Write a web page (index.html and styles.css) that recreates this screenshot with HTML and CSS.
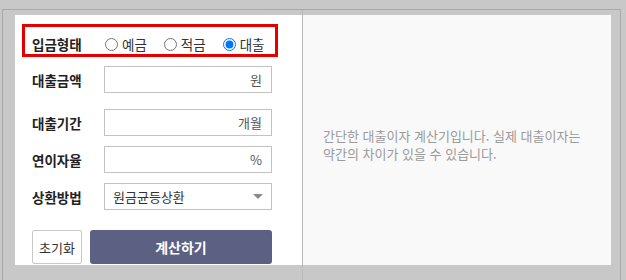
FILE: index.html
```html
<!DOCTYPE html>
<html lang="ko">
<head>
  <meta charset="UTF-8">
  <meta name="viewport" content="width=device-width, initial-scale=1.0">
  <title>대출이자 계산기</title>
  <link rel="stylesheet" href="styles.css">
</head>
<body>
  <div class="frame">
    <div class="col col-left">
      <form class="calc" id="loanForm">
        <div class="row row-type">
          <span class="label">입금형태</span>
          <div class="options">
            <label class="option"><input type="radio" name="type" value="deposit">예금</label>
            <label class="option"><input type="radio" name="type" value="saving">적금</label>
            <label class="option"><input type="radio" name="type" value="loan" checked>대출</label>
          </div>
        </div>

        <div class="row row-amount">
          <span class="label">대출금액</span>
          <div class="field"><input type="text" id="amount"><span class="unit">원</span></div>
        </div>

        <div class="row row-period">
          <span class="label">대출기간</span>
          <div class="field"><input type="text" id="period"><span class="unit">개월</span></div>
        </div>

        <div class="row">
          <span class="label">연이자율</span>
          <div class="field"><input type="text" id="rate"><span class="unit">%</span></div>
        </div>

        <div class="row">
          <span class="label">상환방법</span>
          <div class="field select-wrap">
            <select id="method">
              <option value="principal" selected>원금균등상환</option>
              <option value="equal">원리금균등상환</option>
              <option value="bullet">만기일시상환</option>
            </select>
          </div>
        </div>

        <div class="actions">
          <button type="reset" class="btn-reset">초기화</button>
          <button type="submit" class="btn-calc">계산하기</button>
        </div>
      </form>
    </div>
    <div class="divider"></div>
    <div class="col col-right">
      <div class="info">
        <p>간단한 대출이자 계산기입니다. 실제 대출이자는<br>약간의 차이가 있을 수 있습니다.</p>
      </div>
    </div>
  </div>
</body>
</html>
```

FILE: styles.css
```css
body {
  margin: 0;
  background-color: #c8c8c8;
  font-family: "Noto Sans CJK KR", "Noto Sans", sans-serif;
  font-size: 13px;
  color: #333;
  overflow: hidden;
}
.frame {
  display: flex;
  width: 617px;
  height: 271px;
  margin: 9px 0 0 2px;
  border: 1px solid #a9a9a9;
  border-bottom: none;
}
.col-left {
  width: 287px;
  padding: 5px 0 0 12px;
}
.divider {
  width: 1px;
  background-color: #b9b9b9;
}
.col-right {
  padding: 5px 8px 0 0;
}
.calc {
  box-sizing: border-box;
  width: 287px;
  height: 250px;
  padding: 9px 30px 0 17px;
  background-color: #fff;
  overflow: hidden;
}
.row {
  display: flex;
  align-items: center;
  margin-top: 10px;
}
.label {
  width: 72px;
  flex-shrink: 0;
  font-size: 13.5px;
  font-weight: bold;
  color: #222;
  line-height: 20px;
}
.row-type {
  margin: 0 -6px 0 -10px;
  padding: 7px 3px 0 7px;
  height: 20px;
  border: 3px solid #e50000;
  box-sizing: content-box;
}
.row-amount {
  margin-top: 9px;
}
.row-period {
  margin-top: 16px;
}
.options {
  display: flex;
  gap: 17px;
  padding-left: 1px;
}
.option {
  display: inline-flex;
  align-items: center;
  font-size: 13.5px;
  line-height: 20px;
  color: #333;
}
.option input {
  width: 13px;
  height: 13px;
  margin: 0 4px 0 0;
}
.field {
  position: relative;
  display: flex;
  align-items: center;
  flex: 1;
  min-width: 0;
  height: 25px;
  border: 1px solid #c2c2c2;
  background-color: #fff;
}
.field input {
  flex: 1;
  width: 0;
  min-width: 0;
  height: 100%;
  padding: 0 4px;
  border: none;
  outline: none;
  font: inherit;
  text-align: right;
}
.unit {
  padding-right: 9px;
  color: #555;
  line-height: 20px;
}
.select-wrap select {
  width: 100%;
  height: 100%;
  padding: 0 0 0 8px;
  border: none;
  outline: none;
  background: #fff;
  font: inherit;
  color: #333;
  -webkit-appearance: none;
  appearance: none;
}
.select-wrap::after {
  content: "";
  position: absolute;
  right: 8px;
  top: 10px;
  border-left: 5px solid transparent;
  border-right: 5px solid transparent;
  border-top: 5px solid #8a8a8a;
  pointer-events: none;
}
.actions {
  display: flex;
  gap: 8px;
  margin-top: 20px;
}
.actions button {
  height: 34px;
  font: inherit;
  cursor: pointer;
}
.btn-reset {
  width: 50px;
  padding: 0;
  border: 1px solid #c8c8c8;
  border-radius: 2px;
  background-color: #fff;
  color: #333;
}
.btn-calc {
  flex: 1;
  border: none;
  border-radius: 3px;
  background-color: #5c6184;
  color: #fff;
  font-size: 14px !important;
  font-weight: bold !important;
}
.info {
  box-sizing: border-box;
  display: flex;
  align-items: center;
  width: 308px;
  height: 250px;
  padding: 10px 10px 0 20px;
  background-color: #f9f9f9;
}
.info p {
  margin: 0;
  font-size: 13px;
  line-height: 18px;
  color: #9a9a9a;
}
```
